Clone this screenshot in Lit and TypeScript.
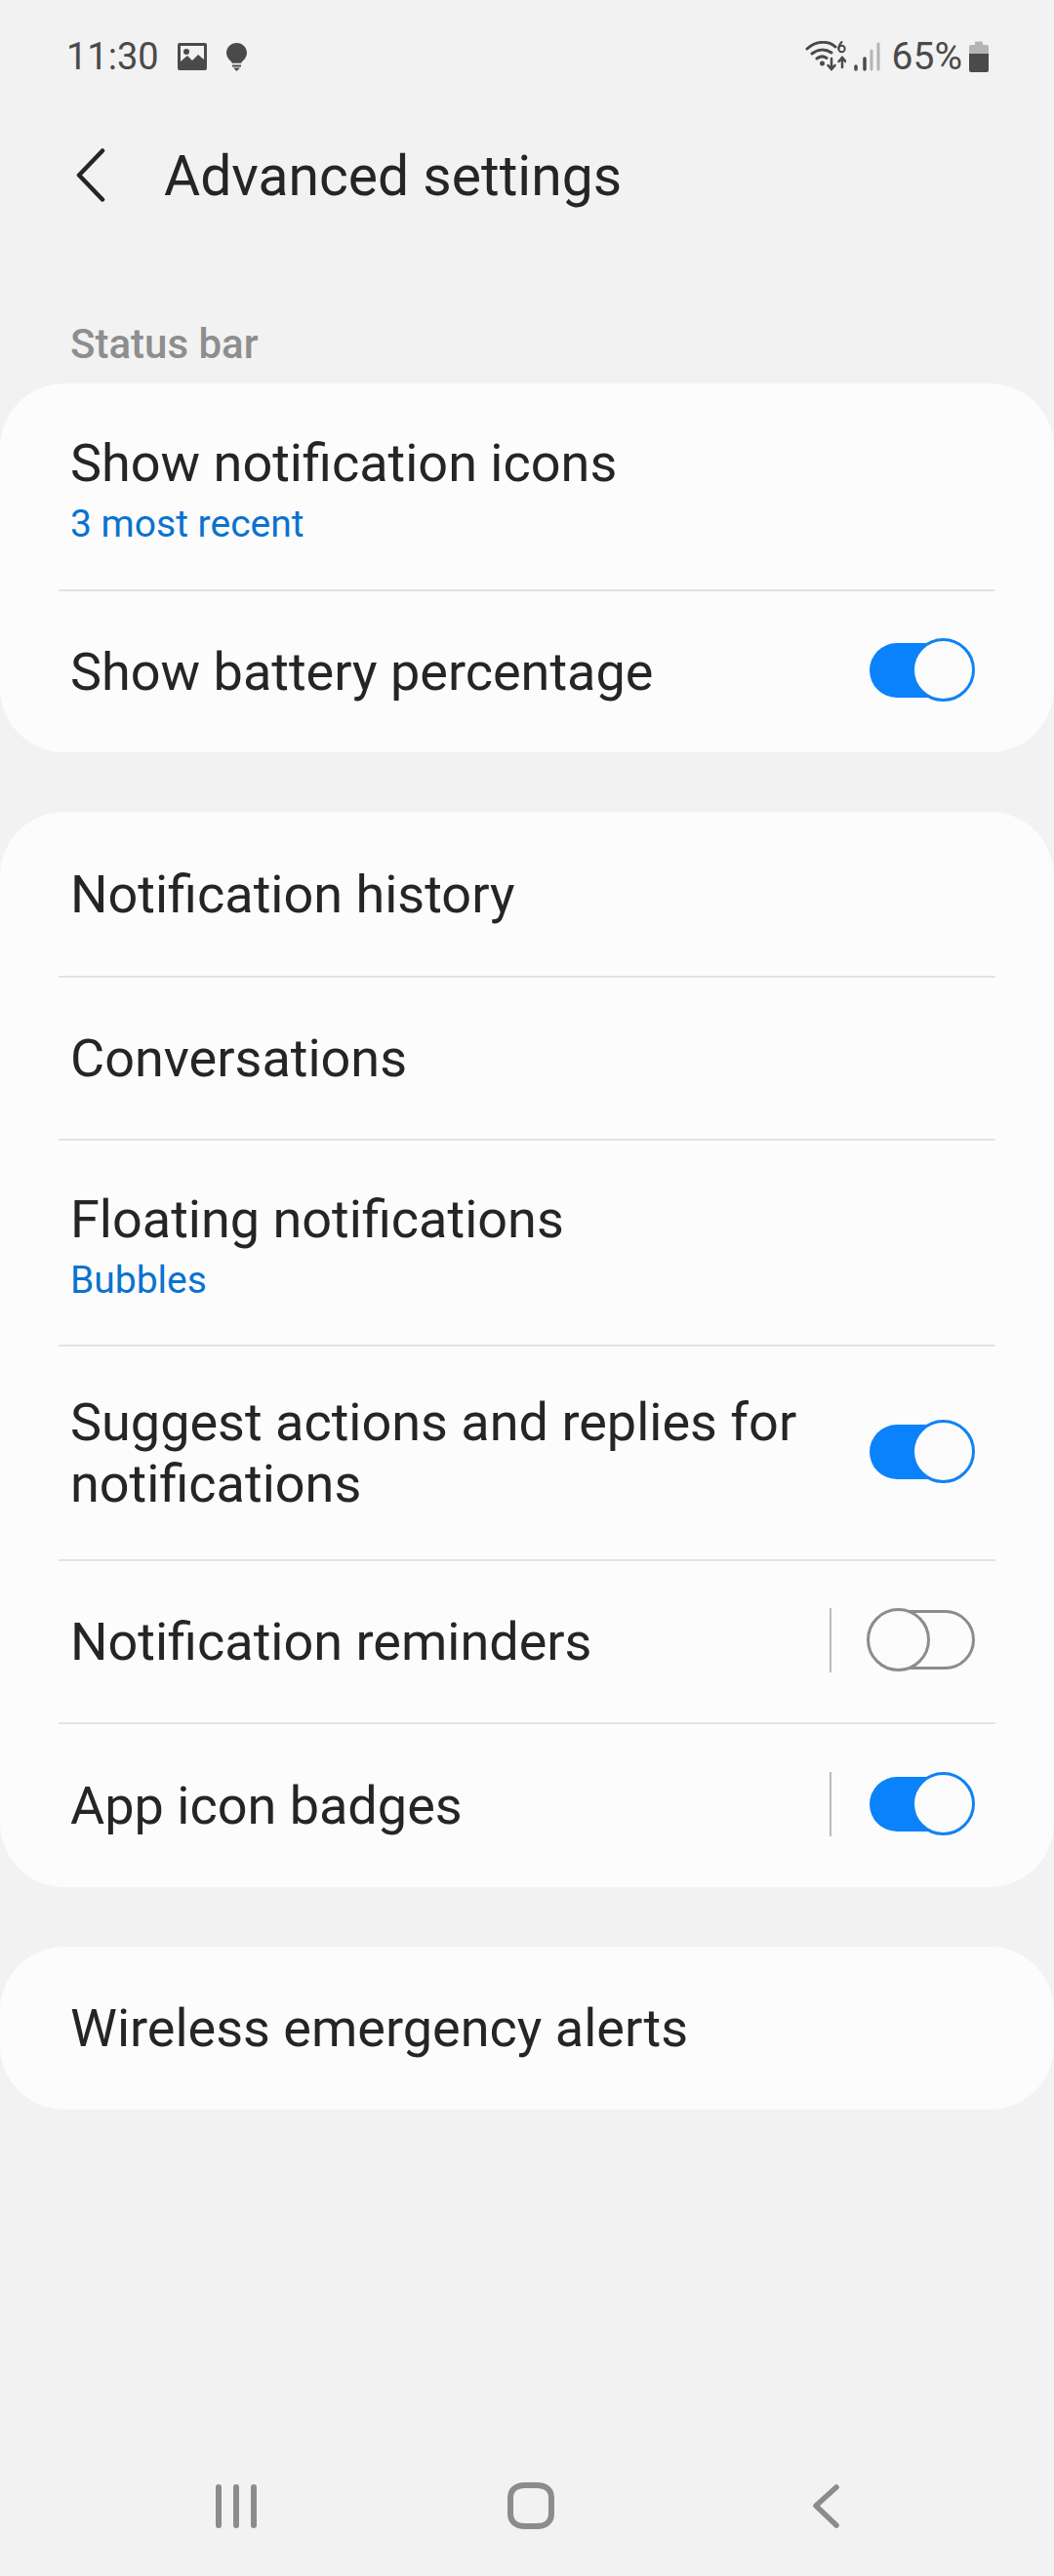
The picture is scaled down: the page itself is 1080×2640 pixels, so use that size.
import { LitElement, html, css } from "lit";
import { customElement } from "lit/decorators.js";

type Row = { title: string; sub?: string; toggle?: boolean; sep?: boolean; h: number; };

const card1: Row[] = [
  { title: "Show notification icons", sub: "3 most recent", h: 213 },
  { title: "Show battery percentage", toggle: true, h: 165 },
];
const card2: Row[] = [
  { title: "Notification history", h: 170 },
  { title: "Conversations", h: 167 },
  { title: "Floating notifications", sub: "Bubbles", h: 211 },
  { title: "Suggest actions and replies for notifications", toggle: true, h: 220 },
  { title: "Notification reminders", toggle: false, sep: true, h: 167 },
  { title: "App icon badges", toggle: true, sep: true, h: 167 },
];
const card3: Row[] = [{ title: "Wireless emergency alerts", h: 167 }];

@customElement("app-root")
export class AppRoot extends LitElement {
  static styles = css`
    :host { display: block; width: 1080px; height: 2640px; background: #f2f2f2; font-family: Roboto, "Liberation Sans", sans-serif; color: #252525; overflow: hidden; }
    .page { display: flex; flex-direction: column; height: 2640px; }
    .status { height: 58px; margin-top: 29px; padding: 0 67px 0 68px; display: flex; align-items: center; color: #4a4a4a; font-size: 38px; }
    .status .left, .status .right { display: flex; align-items: center; }
    .status .right { margin-left: auto; }
    .status svg { display: block; }
    .img { margin-left: 19px; }
    .bulb { margin-left: 20px; }
    .pct { margin-left: 12px; font-size: 39px; }
    .batt { margin-left: 7px; }
    .sig { margin-left: 7px; }
    .appbar { height: 122px; margin-top: 32px; display: flex; align-items: center; }
    .appbar svg { margin-left: 78px; display: block; }
    .appbar h1 { margin: 0 0 0 60px; font-size: 57px; font-weight: 400; }
    .section { margin: 89px 0 0 72px; font-size: 42px; font-weight: 500; color: #8e8e8e; line-height: 46px; height: 46px; }
    .card { background: #fcfcfc; border-radius: 66px; display: flex; flex-direction: column; }
    .card.first { margin-top: 17px; }
    .card.next { margin-top: 61px; }
    .row { box-sizing: border-box; margin: 0 60px; padding: 0 0 0 12px; display: flex; align-items: center; border-bottom: 2px solid #e3e3e3; }
    .row:last-child { border-bottom: none; }
    .text { flex: 1; min-width: 0; }
    .text.has-sub { padding-top: 5px; }
    .title { font-size: 54px; line-height: 63px; }
    .wrap { width: 800px; }
    .sub { font-size: 39px; line-height: 46px; color: #0a72cf; margin-top: 8px; }
    .vsep { width: 2px; height: 66px; background: #bdbdbd; margin: -3px 36px 0 0; }
    .toggle { position: relative; width: 111px; height: 66px; margin: -3px 21px 0 0; flex: none; }
    .track { position: absolute; box-sizing: border-box; border-radius: 31px; }
    .knob { position: absolute; box-sizing: border-box; top: 0; width: 65px; height: 65px; border-radius: 50%; background: #fbfbfb; border-style: solid; border-width: 3px; }
    .on .track { left: 3px; right: 1px; top: 5px; height: 56px; background: #0a82fc; }
    .on .knob { right: 0; border-color: #0f82f5; }
    .off .track { left: 3px; right: 0; top: 2px; height: 61px; border: 3px solid #8c8c8c; background: #fcfcfc; }
    .off .knob { left: 0; border-color: #8c8c8c; }
    .spacer { flex: 1; }
    .nav { height: 48px; margin-bottom: 48px; position: relative; }
    .nav svg { display: block; position: absolute; top: 0; }
    .nav .recent { left: 221px; }
    .nav .home { left: 520px; }
    .nav .back { left: 831px; }
  `;

  private toggle(on: boolean) {
    return html`<div class="toggle ${on ? "on" : "off"}"><div class="track"></div><div class="knob"></div></div>`;
  }

  private row(r: Row) {
    return html`<div class="row" style="height:${r.h}px">
      <div class="text ${r.sub ? "has-sub" : ""}">
        <div class="title ${r.title.startsWith("Suggest") ? "wrap" : ""}">${r.title}</div>
        ${r.sub ? html`<div class="sub">${r.sub}</div>` : ""}
      </div>
      ${r.sep ? html`<div class="vsep"></div>` : ""}
      ${r.toggle !== undefined ? this.toggle(r.toggle) : ""}
    </div>`;
  }

  render() {
    return html`<div class="page">
      <div class="status">
        <div class="left">
          <span>11:30</span>
          <svg class="img" width="30" height="28" viewBox="0 0 30 28"><path fill="#4a4a4a" fill-rule="evenodd" d="M2 0h26a2 2 0 0 1 2 2v24a2 2 0 0 1-2 2H2a2 2 0 0 1-2-2V2a2 2 0 0 1 2-2zM3 3v16l7-6 5 5 6-6 6 5V3z"/><circle cx="9" cy="9" r="3" fill="#4a4a4a"/></svg>
          <svg class="bulb" width="21" height="29" viewBox="0 0 21 29"><path fill="#4a4a4a" d="M10.500 0C4.700 0 0 4.600 0 10.300c0 3.700 2.200 6.400 4.300 8.300.9.800 1.200 1.400 1.400 2.100h9.600c.2-.7.500-1.300 1.400-2.100 2.100-1.900 4.300-4.600 4.300-8.300C21 4.600 16.300 0 10.500 0zM6 22.600h9v2H6zM7 25.600h7L10.500 29z"/></svg>
        </div>
        <div class="right">
          <svg width="42" height="32" viewBox="0 0 42 32" fill="none" stroke="#4a4a4a" stroke-linecap="round">
            <path stroke-width="3" d="M2 8C11-.5 24-.5 31 6M7 13c6-5 14-5 20-1M12 18c3-2.500 7-2.500 10-.5"/>
            <circle cx="17.500" cy="23" r="2.500" fill="#4a4a4a" stroke="none"/>
            <path stroke-width="2.500" d="M27 18v11M23.500 25l3.500 4 3.500-4M38 27V17M34.500 21l3.500-4 3.500 4"/>
            <circle cx="37.500" cy="8" r="3.200" stroke-width="2"/><path stroke-width="2" d="M34.300 8C34.300 5 35.500 3 37.500 1"/>
          </svg>
          <svg class="sig" width="28" height="30" viewBox="0 0 28 30" fill="none" stroke-linecap="round">
            <path stroke="#4a4a4a" stroke-width="3.500" d="M3 25v3M12 17v11"/>
            <path stroke="#b4b4b4" stroke-width="3" d="M19 9v19M26 2v26"/>
          </svg>
          <span class="pct">65%</span>
          <svg class="batt" width="20" height="32" viewBox="0 0 20 32"><path fill="#b4b4b4" d="M6 1.500a1 1 0 0 1 1-1h6a1 1 0 0 1 1 1V4h4a2 2 0 0 1 2 2v8H0V6a2 2 0 0 1 2-2h4z"/><path fill="#4a4a4a" d="M0 13h20v17a2 2 0 0 1-2 2H2a2 2 0 0 1-2-2z"/></svg>
        </div>
      </div>
      <div class="appbar">
        <svg width="30" height="58" viewBox="0 0 30 58" fill="none" stroke="#252525" stroke-width="4.500" stroke-linecap="round" stroke-linejoin="round"><path d="M27 3.500 3 28.500l24 25"/></svg>
        <h1>Advanced settings</h1>
      </div>
      <div class="section">Status bar</div>
      <div class="card first">${card1.map((r) => this.row(r))}</div>
      <div class="card next">${card2.map((r) => this.row(r))}</div>
      <div class="card next">${card3.map((r) => this.row(r))}</div>
      <div class="spacer"></div>
      <div class="nav">
        <svg class="recent" width="42" height="48" viewBox="0 0 42 48" stroke="#8c8c8c" stroke-width="6" stroke-linecap="round"><path d="M3 5v39M21 5v39M39 5v39"/></svg>
        <svg class="home" width="48" height="48" viewBox="0 0 48 48" fill="none" stroke="#8c8c8c" stroke-width="6"><path d="M18 3h12c10 0 15 5 15 13v16c0 8-5 13-15 13H18C8 45 3 40 3 32V16C3 8 8 3 18 3z"/></svg>
        <svg class="back" width="30" height="48" viewBox="0 0 30 48" fill="none" stroke="#8c8c8c" stroke-width="5.500" stroke-linecap="round" stroke-linejoin="round"><path d="M26 5 5 24l21 20"/></svg>
      </div>
    </div>`;
  }
}
